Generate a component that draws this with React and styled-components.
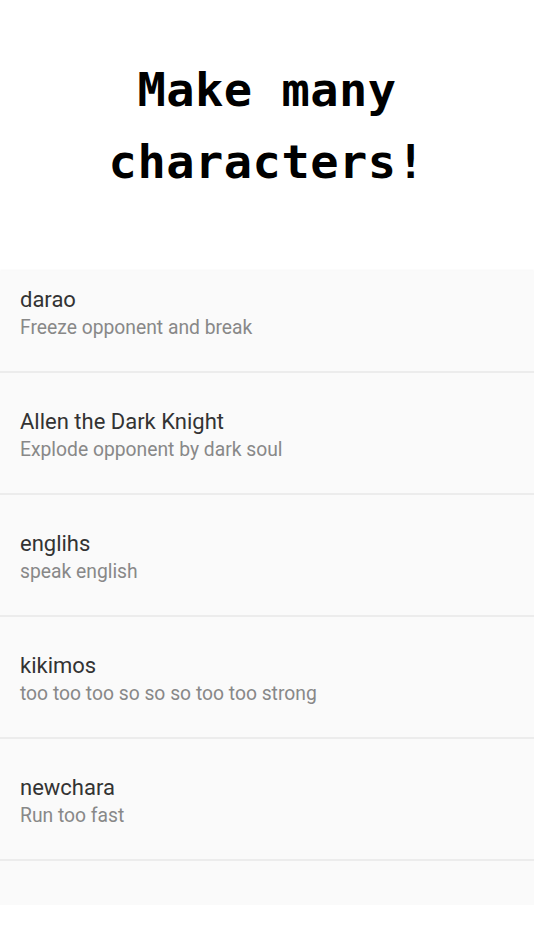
import React, { useLayoutEffect, useRef } from "react";
import styled, { createGlobalStyle } from "styled-components";

const Global = createGlobalStyle`
  html, body { margin: 0; padding: 0; background: #ffffff; }
  body { font-family: Roboto, "Noto Sans", sans-serif; }
`;

const Page = styled.div`
  width: 534px;
  height: 950px;
  display: flex;
  flex-direction: column;
  background: #ffffff;
  overflow: hidden;
`;

const Header = styled.header`
  height: 271px;
  flex: none;
  display: flex;
  align-items: flex-start;
  justify-content: center;
  box-sizing: border-box;
  padding-top: 54px;
`;

const Title = styled.h1`
  margin: 0;
  font-family: "DejaVu Sans Mono", "Liberation Mono", monospace;
  font-weight: bold;
  font-size: 47px;
  line-height: 72px;
  letter-spacing: 0.5px;
  text-align: center;
  color: #000;
`;

const List = styled.ul`
  margin: 0;
  padding: 0;
  list-style: none;
  height: 634px;
  flex: none;
  overflow-y: auto;
  scrollbar-width: none;
  background: #fafafa;
  box-shadow: 0 -1px 2px rgba(0, 0, 0, 0.04);
  &::-webkit-scrollbar { display: none; }
`;

const Item = styled.li`
  height: 120px;
  box-sizing: content-box;
  border-bottom: 2px solid #ececec;
  padding: 0 20px;
  display: flex;
  flex-direction: column;
  justify-content: flex-start;
`;

const Name = styled.div`
  margin-top: 36px;
  font-size: 22px;
  line-height: 26px;
  color: #333333;
`;

const Desc = styled.div`
  font-size: 19.3px;
  line-height: 30px;
  color: #888888;
`;

const chars = [
  { name: "darao", desc: "Freeze opponent and break" },
  { name: "Allen the Dark Knight", desc: "Explode opponent by dark soul" },
  { name: "englihs", desc: "speak english" },
  { name: "kikimos", desc: "too too too so so so too too strong" },
  { name: "newchara", desc: "Run too fast" },
  { name: "-----", desc: "-----" },
];

export default function App() {
  const listRef = useRef(null);
  useLayoutEffect(() => {
    if (listRef.current) listRef.current.scrollTop = 20;
  }, []);
  return (
    <Page>
      <Global />
      <Header>
        <Title>
          Make many
          <br />
          characters!
        </Title>
      </Header>
      <List ref={listRef}>
        {chars.map((c, i) => (
          <Item key={i}>
            <Name>{c.name}</Name>
            <Desc>{c.desc}</Desc>
          </Item>
        ))}
      </List>
    </Page>
  );
}
